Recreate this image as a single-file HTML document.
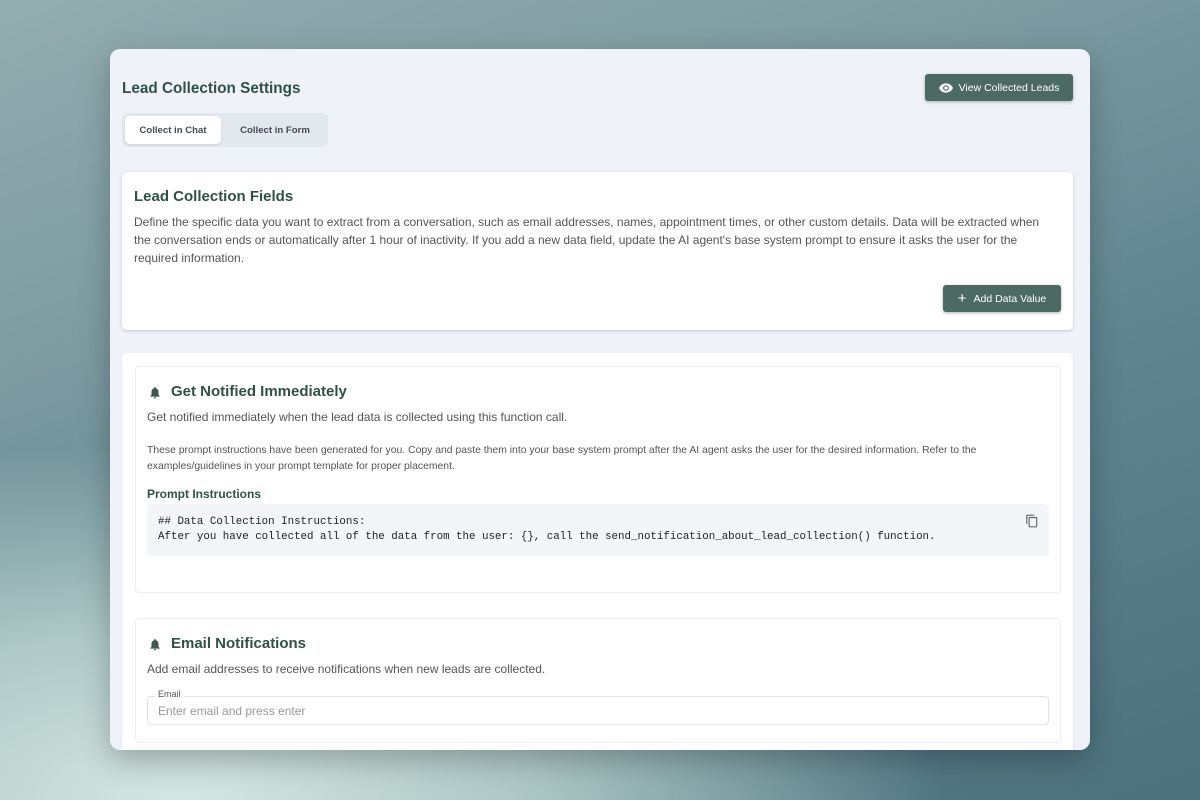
<!DOCTYPE html>
<html><head><meta charset="utf-8"><style>
*{box-sizing:border-box;margin:0;padding:0}
body{width:1200px;height:800px;overflow:hidden;font-family:"Liberation Sans",Arial,sans-serif;
background:linear-gradient(160deg,#93adb0 0%,#7d9ba1 30%,#5f8590 60%,#4c717c 100%);position:relative}
.bg2{position:absolute;inset:0;background:radial-gradient(ellipse 900px 420px at 15% 100%,#d6e7e2 0%,rgba(200,222,216,.75) 40%,rgba(200,220,215,0) 85%)}
.panel{position:absolute;left:110px;top:49px;width:980px;height:701px;background:#eff3f9;border-radius:10px;overflow:hidden;box-shadow:0 10px 30px rgba(0,0,0,.25)}
h1{position:absolute;left:12px;top:31px;font-size:15.3px;color:#2f5247;font-weight:bold}
.vbtn{position:absolute;left:815px;top:25px;width:148px;height:27px;background:#4b6a63;border-radius:3px;color:#fff;font-size:10.5px;display:flex;align-items:center;justify-content:center;gap:6px;box-shadow:0 1px 3px rgba(0,0,0,.3)}
.tabs{position:absolute;left:12px;top:64px;width:206px;height:34px;background:#e3e7ee;border-radius:6px}
.tab{position:absolute;top:3px;height:28px;font-size:9.6px;font-weight:bold;color:#444b55;display:flex;align-items:center;justify-content:center}
.t1{left:3px;width:96px;background:#fff;border-radius:5px;box-shadow:0 1px 2px rgba(0,0,0,.1)}
.t2{left:106px;width:94px}
.card{position:absolute;background:#fff;border-radius:5px;box-shadow:0 1px 3px rgba(0,0,0,.18)}
.c1{left:12px;top:123px;width:951px;height:158px}
.c1 h2{position:absolute;left:12px;top:16px;font-size:15px;color:#2f5247}
.c1 p{position:absolute;left:12px;top:41px;width:935px;font-size:12px;line-height:18px;color:#555;white-space:nowrap}
.abtn{position:absolute;left:821px;top:113px;width:118px;height:27px;background:#4b6a63;border-radius:3px;color:#fff;font-size:10.5px;display:flex;align-items:center;justify-content:center;gap:7px;box-shadow:0 1px 3px rgba(0,0,0,.3)}
.c2{left:12px;top:304px;width:951px;height:420px;box-shadow:0 1px 2px rgba(0,0,0,.08)}
.box{position:absolute;left:13px;width:926px;border:1px solid #eceef0;border-radius:4px;background:#fff}
.b1{top:13px;height:227px}.b2{top:265px;height:125px}
.box h3{position:absolute;left:35px;top:16px;font-size:15px;color:#2f5247}
.bell{position:absolute;left:12px;top:18px}
.desc{position:absolute;left:11px;font-size:12px;color:#555}
.small{position:absolute;left:11px;top:76px;width:890px;font-size:10.4px;line-height:16px;color:#555}
.pi{position:absolute;left:11px;top:120px;font-size:12px;font-weight:bold;color:#2f5247}
.code{position:absolute;left:11px;top:137px;width:902px;height:52px;background:#f3f5f8;border-radius:4px;font-family:"Liberation Mono",monospace;font-size:10.8px;line-height:15px;color:#222;padding:11px 11px}
.copy{position:absolute;right:10px;top:9px}
.inp{position:absolute;left:11px;top:77px;width:902px;height:29px;border:1px solid #dfe2e6;border-radius:4px;font-size:12px;color:#999;padding:7px 10px}
.lbl{position:absolute;left:19px;top:70px;font-size:9px;color:#555;background:#fff;padding:0 3px}
</style></head><body><div class="bg2"></div>
<div class="panel">
<h1>Lead Collection Settings</h1>
<div class="vbtn"><svg width="14" height="10" viewBox="0 0 24 16"><path d="M12 0C6.5 0 2 3.5 0 8c2 4.5 6.5 8 12 8s10-3.5 12-8C22 3.5 17.5 0 12 0zm0 13a5 5 0 110-10 5 5 0 010 10zm0-8a3 3 0 100 6 3 3 0 000-6z" fill="#fff"/></svg>View Collected Leads</div>
<div class="tabs"><div class="tab t1">Collect in Chat</div><div class="tab t2">Collect in Form</div></div>
<div class="card c1"><h2>Lead Collection Fields</h2>
<p>Define the specific data you want to extract from a conversation, such as email addresses, names, appointment times, or other custom details. Data will be extracted when<br>the conversation ends or automatically after 1 hour of inactivity. If you add a new data field, update the AI agent's base system prompt to ensure it asks the user for the<br>required information.</p>
<div class="abtn"><span style="font-size:15px;font-weight:300">+</span>Add Data Value</div></div>
<div class="card c2">
<div class="box b1"><svg class="bell" width="14" height="15" viewBox="0 0 24 24"><path d="M12 22a2 2 0 002-2h-4a2 2 0 002 2zm6-6V11c0-3.1-1.6-5.6-4.5-6.3V4a1.5 1.5 0 00-3 0v.7C7.6 5.4 6 7.9 6 11v5l-2 2v1h16v-1l-2-2z" fill="#3e5750"/></svg><h3>Get Notified Immediately</h3>
<div class="desc" style="top:43px">Get notified immediately when the lead data is collected using this function call.</div>
<div class="small">These prompt instructions have been generated for you. Copy and paste them into your base system prompt after the AI agent asks the user for the desired information. Refer to the examples/guidelines in your prompt template for proper placement.</div>
<div class="pi">Prompt Instructions</div>
<div class="code">## Data Collection Instructions:<br>After you have collected all of the data from the user: {}, call the send_notification_about_lead_collection() function.
<svg class="copy" width="14" height="16" viewBox="0 0 24 24"><path d="M16 1H4a2 2 0 00-2 2v14h2V3h12V1zm3 4H8a2 2 0 00-2 2v14a2 2 0 002 2h11a2 2 0 002-2V7a2 2 0 00-2-2zm0 16H8V7h11v14z" fill="#666"/></svg></div>
</div>
<div class="box b2"><svg class="bell" width="14" height="15" viewBox="0 0 24 24"><path d="M12 22a2 2 0 002-2h-4a2 2 0 002 2zm6-6V11c0-3.1-1.6-5.6-4.5-6.3V4a1.5 1.5 0 00-3 0v.7C7.6 5.4 6 7.9 6 11v5l-2 2v1h16v-1l-2-2z" fill="#3e5750"/></svg><h3>Email Notifications</h3>
<div class="desc" style="top:43px">Add email addresses to receive notifications when new leads are collected.</div>
<div class="inp">Enter email and press enter</div><div class="lbl">Email</div>
</div>
</div>
</div>
</body></html>
